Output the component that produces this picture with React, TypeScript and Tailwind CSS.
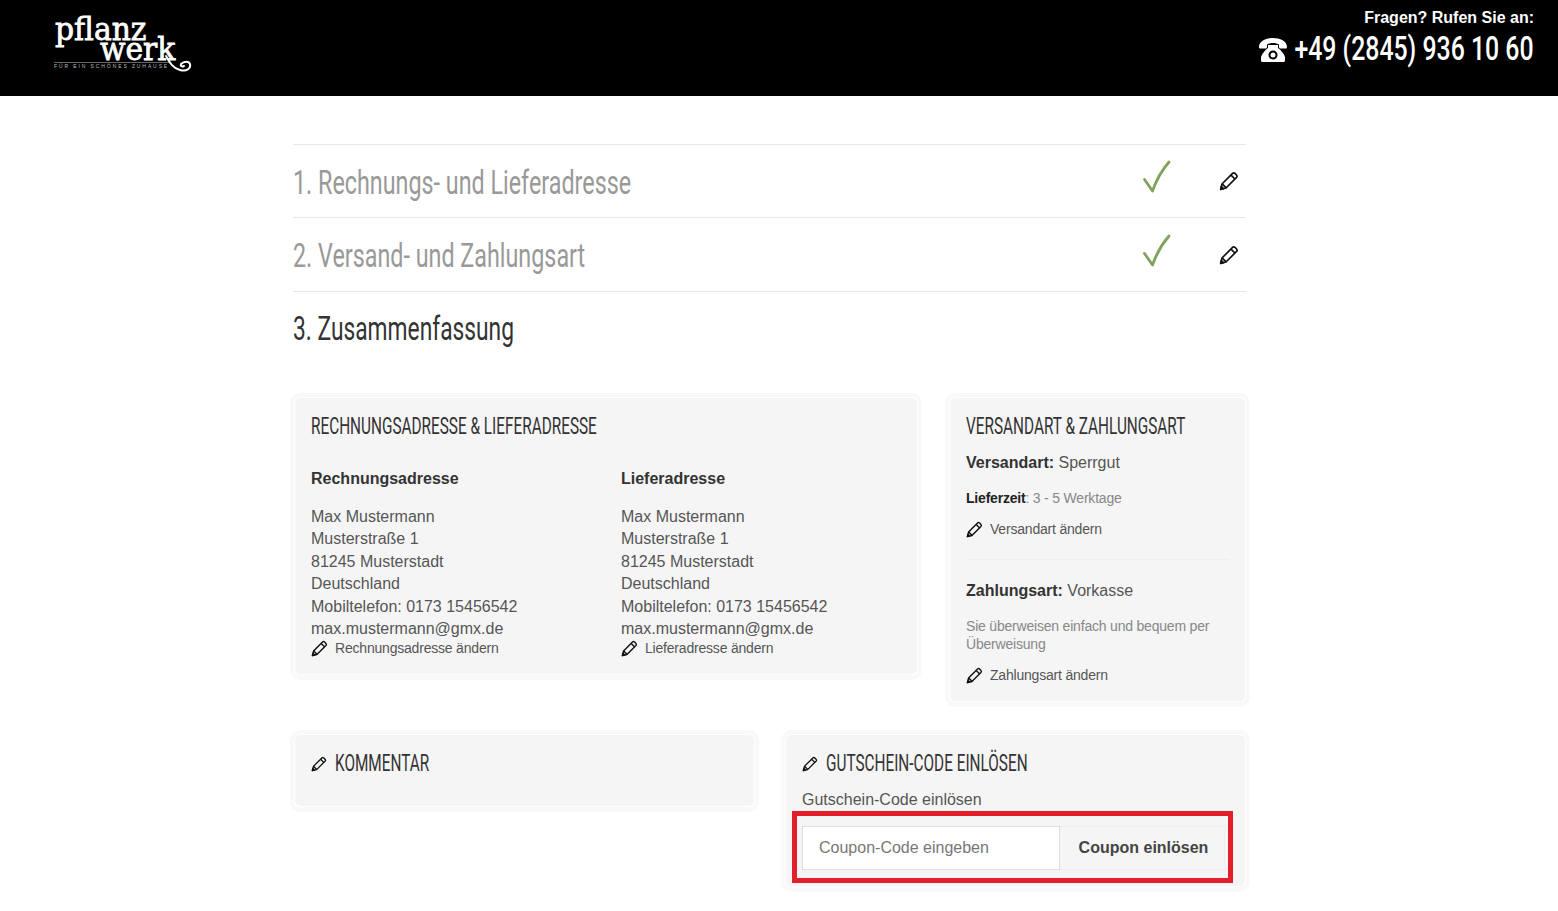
const sans = "font-['Liberation_Sans',Arial,sans-serif]"
const condensed = "font-['Roboto',sans-serif] whitespace-nowrap"

function Pencil({ className = "" }: { className?: string }) {
  return (
    <svg viewBox="0 0 18 18" className={`shrink-0 ${className}`} fill="none" stroke="#111" strokeWidth="1.5" strokeLinejoin="round">
      <path d="M1.500 16.500l1.200-4.800L12.200 2.200a1.600 1.600 0 0 1 2.200 0l1.400 1.400a1.600 1.600 0 0 1 0 2.200L6.300 15.300z" />
      <path d="M10.800 3.700l3.500 3.500M2.800 11.600l3.600 3.600" />
      <path d="M1.500 16.500l.6-2.400 1.800 1.800z" fill="#111" />
    </svg>
  )
}

function Check() {
  return (
    <svg viewBox="0 0 30 34" className="-mt-2 h-[34px] w-[30px]" fill="none" stroke="#7fa35c" strokeLinecap="round" strokeLinejoin="round">
      <path d="M2.500 19.500L10.500 31C14 21 20 10 27 2" strokeWidth="2.800" />
    </svg>
  )
}

function Phone() {
  return (
    <svg viewBox="0 0 28 24" className="mt-[3px] h-6 w-7 shrink-0" fill="#fff">
      <path d="M0 9C0 3 7 0 14 0s14 3 14 9c0 1-.6 1.500-1.500 1.500h-5c-.9 0-1.500-.6-1.500-1.500V6.500C18.500 5.600 16.500 5 14 5s-4.500.6-6 1.500V9c0 .9-.6 1.500-1.500 1.500h-5C.6 10.500 0 10 0 9z" />
      <path fillRule="evenodd" d="M9 7h10v3c3 2 6 6 7 9v3.500c0 .9-.6 1.500-1.500 1.500h-21C2.600 24 2 23.400 2 22.500V19c1-3 4-7 7-9zm5 5.500a4.500 4.500 0 1 0 0 9 4.500 4.500 0 0 0 0-9zm0 2a2.500 2.500 0 1 1 0 5 2.500 2.500 0 0 1 0-5z" />
    </svg>
  )
}

function Logo() {
  return (
    <div className="relative ml-[54px] h-[72px] w-[140px] font-['DejaVu_Serif',serif] text-white">
      <div className="absolute left-[1px] top-[20px] origin-left scale-x-[.93] text-[32px] leading-[18px] [-webkit-text-stroke:0.8px_white]">pflanz</div>
      <div className="absolute left-[46px] top-[40px] origin-left scale-x-[.93] text-[32px] leading-[18px] [-webkit-text-stroke:0.8px_white]">werk</div>
      <div className="absolute left-0 top-[62px] h-px w-[116px] bg-[#666]" />
      <div className={`absolute left-0 top-[63px] whitespace-nowrap text-[5px] leading-[6px] tracking-[1.9px] text-[#bbb] ${sans}`}>FÜR EIN SCHÖNES ZUHAUSE</div>
      <svg viewBox="0 0 40 24" className="absolute left-[106px] top-[50px] h-6 w-10" fill="none" stroke="#fff" strokeWidth="2" strokeLinecap="round">
        <path d="M6 6C9 11 12 18 20 20C27 22 31 18 30 14C29 11 24 11 21 14C20 16 22 17 24 16" />
      </svg>
    </div>
  )
}

function Step({ title, done, className }: { title: string; done?: boolean; className: string }) {
  return (
    <div className={`flex items-center border-t border-[#e8e8e8] ${className}`}>
      <div className="min-w-0 flex-1">
        <h2 className={`${condensed} origin-left scale-x-[.686] pt-[2px] text-[34px] text-[#999]`}>{title}</h2>
      </div>
      {done && (
        <div className="mr-[7px] flex items-center gap-[47px]">
          <Check />
          <Pencil className="h-5 w-5" />
        </div>
      )}
    </div>
  )
}

function Card({ className = "", children }: { className?: string; children: React.ReactNode }) {
  return (
    <div className={`rounded-[10px] border-[4px] border-b-[5px] border-[#f9f9f9] ${className}`}>
      <div className="h-full rounded-[7px] border border-white bg-[#f5f5f5] px-4">{children}</div>
    </div>
  )
}

function CardTitle({ children }: { children: React.ReactNode }) {
  return <h3 className={`${condensed} origin-left scale-x-[.667] text-[23px] leading-[28px] text-[#333]`}>{children}</h3>
}

function EditLink({ label }: { label: string }) {
  return (
    <a className="flex items-center gap-[7px] text-sm leading-[20px] tracking-[-0.2px] text-[#555]">
      <Pencil className="h-[17px] w-[17px]" />
      {label}
    </a>
  )
}

function Address({ title, link, className }: { title: string; link: string; className: string }) {
  return (
    <div className={className}>
      <h4 className="text-base font-bold leading-[22px] text-[#333]">{title}</h4>
      <div className="mt-[16px] text-base leading-[22.400px] text-[#555]">
        <div>Max Mustermann</div>
        <div>Musterstraße 1</div>
        <div>81245 Musterstadt</div>
        <div>Deutschland</div>
        <div>Mobiltelefon: 0173 15456542</div>
        <div>max.mustermann@gmx.de</div>
      </div>
      <div className="-mt-[2px]">
        <EditLink label={link} />
      </div>
    </div>
  )
}

export default function App() {
  return (
    <div className={`min-h-[911px] bg-white ${sans}`}>
      <header className="flex h-24 items-start justify-between bg-black">
        <Logo />
        <div className="mr-6 mt-[9px] text-right text-white">
          <div className="text-base font-bold leading-[18px]">Fragen? Rufen Sie an:</div>
          <div className="mt-[1px] flex items-center justify-end gap-[7px]">
            <Phone />
            <div className="flex w-[240px] justify-end">
              <span className={`${condensed} origin-right scale-x-[.73] text-[34px] font-medium leading-[40px]`}>+49 (2845) 936 10 60</span>
            </div>
          </div>
        </div>
      </header>

      <main className="ml-[290px] w-[960px] pt-12">
        <div className="mx-[3px] w-[953px]">
          <Step title="1. Rechnungs- und Lieferadresse" done className="h-[73px]" />
          <Step title="2. Versand- und Zahlungsart" done className="h-[74px]" />
          <div className="flex h-[76px] items-center border-t border-[#e8e8e8]">
            <h2 className={`${condensed} origin-left scale-x-[.67] -mt-[2px] text-[34px] text-[#333]`}>3. Zusammenfassung</h2>
          </div>
        </div>

        <div className="mt-[26px] flex items-start gap-[23px]">
          <Card className="h-[287px] w-[632px]">
            <div className="pt-[15px]">
              <CardTitle>RECHNUNGSADRESSE &amp; LIEFERADRESSE</CardTitle>
              <div className="mt-[27px] flex">
                <Address title="Rechnungsadresse" link="Rechnungsadresse ändern" className="w-[310px] shrink-0" />
                <Address title="Lieferadresse" link="Lieferadresse ändern" className="flex-1" />
              </div>
            </div>
          </Card>

          <Card className="h-[314px] w-[305px]">
            <div className="pt-[15px]">
              <CardTitle>VERSANDART &amp; ZAHLUNGSART</CardTitle>
              <p className="mt-[11px] text-base leading-[22px] text-[#555]">
                <b className="text-[#333]">Versandart:</b> Sperrgut
              </p>
              <p className="mt-[14px] text-sm leading-[20px] tracking-[-0.2px] text-[#888]">
                <b className="text-[#222]">Lieferzeit</b>: 3 - 5 Werktage
              </p>
              <div className="mt-[11px]">
                <EditLink label="Versandart ändern" />
              </div>
              <div className="mt-[20px] border-t border-[#eee]" />
              <p className="mt-[20px] text-base leading-[22px] text-[#555]">
                <b className="text-[#333]">Zahlungsart:</b> Vorkasse
              </p>
              <p className="mt-[15px] text-sm leading-[18px] tracking-[-0.2px] text-[#888]">Sie überweisen einfach und bequem per Überweisung</p>
              <div className="mt-[12px]">
                <EditLink label="Zahlungsart ändern" />
              </div>
            </div>
          </Card>
        </div>

        <div className="flex items-start gap-[22px] pt-[23px]">
          <Card className="h-[82px] w-[469px]">
            <div className="flex items-center gap-2 pt-[15px]">
              <Pencil className="h-4 w-4" />
              <CardTitle>KOMMENTAR</CardTitle>
            </div>
          </Card>

          <Card className="h-[162px] w-[469px]">
            <div className="pt-[15px]">
              <div className="flex items-center gap-2">
                <Pencil className="h-4 w-4" />
                <CardTitle>GUTSCHEIN-CODE EINLÖSEN</CardTitle>
              </div>
              <div className="mt-[11px] text-base leading-[22px] text-[#555]">Gutschein-Code einlösen</div>
              <div className="relative mt-[15px] flex h-11 w-[423px]">
                <input
                  placeholder="Coupon-Code eingeben"
                  className="h-11 w-[258px] border border-[#ddd] bg-white px-4 text-base text-[#555] outline-none placeholder:text-[#777]"
                />
                <button className="h-11 flex-1 border border-l-0 border-[#eee] pl-[3px] text-base font-bold text-[#444]">Coupon einlösen</button>
                <div className="pointer-events-none absolute -left-[10px] -right-[8px] -top-[15px] -bottom-[13px] border-[5px] border-[#e41e2b]" />
              </div>
            </div>
          </Card>
        </div>
      </main>
    </div>
  )
}
